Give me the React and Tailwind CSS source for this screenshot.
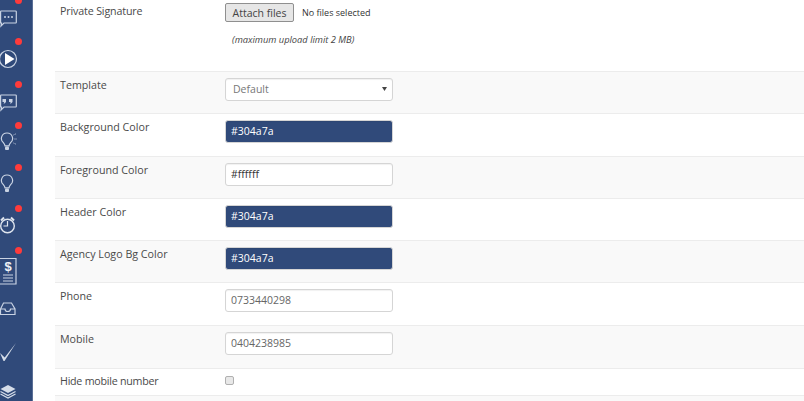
import React from "react";

const S = { fill: "none", stroke: "#c9d3e3", strokeWidth: 1.2 };

const Msg = ({ children }) => (
  <svg width="18" height="20" viewBox="0 0 18 20" className="block">
    <path d="M1 2h14.500a.8.800 0 0 1 .8.800v10.400a.8.800 0 0 1-.8.800H4l-3 3 .5-3H.6V2.800A.8.800 0 0 1 1 2z" {...S} />
    {children}
  </svg>
);

const Bulb = ({ rays }) => (
  <svg width="18" height="20" viewBox="0 0 18 20" className="block">
    <path d="M7 1a5.500 5.500 0 0 0-3.500 9.800c.8.800 1.300 1.800 1.500 3h4c.2-1.200.7-2.200 1.500-3A5.500 5.500 0 0 0 7 1z" {...S} />
    <rect x="5" y="14.500" width="4" height="3.500" rx="1" fill="#c9d3e3" />
    {rays && <path d="M13.500 3l2.500-1.200M14.500 7H17M13.500 11l2.500 1.200" stroke="#c9d3e3" strokeWidth="1" strokeDasharray="1 1" />}
  </svg>
);

const icons = [
  {
    cls: "h-[38px] pt-[9px]",
    dot: "top-[-3px]",
    svg: (
      <Msg>
        <circle cx="5" cy="8" r="1" fill="#c9d3e3" />
        <circle cx="8.500" cy="8" r="1" fill="#c9d3e3" />
        <circle cx="12" cy="8" r="1" fill="#c9d3e3" />
      </Msg>
    ),
  },
  {
    cls: "h-[43px] pt-[11px]",
    dot: "top-[0px]",
    svg: (
      <svg width="20" height="20" viewBox="0 0 20 20" className="block">
        <circle cx="8" cy="10" r="8.500" {...S} />
        <path d="M5 4 14.500 10 5 16z" fill="#fff" />
      </svg>
    ),
  },
  {
    cls: "h-[42px] pt-[12px]",
    dot: "top-[0px]",
    svg: (
      <Msg>
        <path d="M2.500 6h3.500v3l-1.500 1.500H3.500l.7-1.500H2.500zM9 6h3.500v3L11 10.500h-1l.7-1.500H9z" fill="#c9d3e3" />
      </Msg>
    ),
  },
  { cls: "h-[41px] pt-[9px]", dot: "top-[-1px]", svg: <Bulb rays /> },
  { cls: "h-[42px] pt-[10px]", dot: "top-[0px]", svg: <Bulb /> },
  {
    cls: "h-[41px] pt-[9px]",
    dot: "top-[-1px]",
    svg: (
      <svg width="18" height="20" viewBox="0 0 18 20" className="block">
        <circle cx="7.500" cy="11" r="6.800" fill="none" stroke="#dfe5ee" strokeWidth="1.400" />
        <path d="M7.500 6v5H3.500" fill="none" stroke="#dfe5ee" strokeWidth="1.200" />
        <path d="M1 5.500 4 2.500M14 5.500 11 2.500" stroke="#dfe5ee" strokeWidth="2" />
      </svg>
    ),
  },
  {
    cls: "h-[46px] pt-[10px]",
    dot: "top-[0px]",
    svg: (
      <svg width="18" height="28" viewBox="0 0 18 28" className="block">
        <path d="M0 1.500h16V27H0" {...S} />
        <text x="8" y="14" fontFamily="'Liberation Sans', sans-serif" fontSize="13" fontWeight="700" textAnchor="middle" fill="#eef1f6">$</text>
        <path d="M3 18h10M3 21h10M3 24h10" stroke="#c9d3e3" strokeWidth="1.200" />
      </svg>
    ),
  },
  {
    cls: "h-[37px] pt-[9px]",
    svg: (
      <svg width="18" height="14" viewBox="0 0 18 14" className="block">
        <path d="M3.500 1h8l3.500 6v5.500H.5V7zM.5 7H5c0 2 1 2.500 2.700 2.500S10.500 9 10.500 7H15" {...S} />
      </svg>
    ),
  },
  {
    cls: "h-[44px] pt-[12px]",
    svg: (
      <svg width="18" height="20" viewBox="0 0 18 20" className="block">
        <path d="M0 11l3.500 8h1L16 1 4.700 15.500z" fill="#d5dde9" />
      </svg>
    ),
  },
  {
    cls: "h-[27px] pt-[10px]",
    svg: (
      <svg width="18" height="16" viewBox="0 0 18 16" className="block">
        <path d="M8 1l7.500 4L8 9 .5 5z" fill="#d5dde9" />
        <path d="M.5 7.500 8 11.500l7.500-4M.5 10 8 14l7.500-4" fill="none" stroke="#d5dde9" strokeWidth="1.200" />
      </svg>
    ),
  },
];

const inputBase =
  "w-[168px] h-[23px] rounded-[3px] border border-[#d5d5d5] text-[10.5px] outline-none shadow-[inset_0_1px_1px_rgba(0,0,0,0.06)]";

const Row = ({ label, grey, h, children, labelCls = "pt-[5px]" }) => (
  <div className={`flex border-t border-[#ececec] ${grey ? "bg-[#f9f9f9]" : "bg-white"} ${h}`}>
    <div className={`w-[170px] pl-[5px] text-[#4a4a4a] text-[10.7px] leading-[16px] ${labelCls}`}>{label}</div>
    <div className="flex-1">{children}</div>
  </div>
);

const Box = ({ value, dark }) => (
  <div className="pt-[6px]">
    <input
      readOnly
      value={value}
      className={`${inputBase} block px-[5px] pb-[2px] ${dark ? "bg-[#304a7a] text-white font-medium" : "bg-white text-[#333333]"}`}
    />
  </div>
);

const Field = ({ value }) => (
  <div className="pt-[6px]">
    <input readOnly value={value} className={`${inputBase} block px-[5px] pb-[2px] bg-white text-[#666666]`} />
  </div>
);

export default function App() {
  return (
    <div className="flex h-[401px] w-[804px] overflow-hidden bg-white font-['Open_Sans',sans-serif]">
      <aside className="w-[33px] shrink-0 bg-[#304a7a] border-r border-[#5a6f96] overflow-hidden">
        {icons.map((it, i) => (
          <div key={i} className={`relative ${it.cls}`}>
            {it.svg}
            {it.dot && <span className={`absolute left-[15px] ${it.dot} w-[7px] h-[7px] rounded-full bg-[#ff3b3b]`} />}
          </div>
        ))}
      </aside>
      <main className="ml-[22px] flex-1 min-w-0">
        <div className="flex h-[71px] bg-white">
          <div className="w-[170px] pl-[5px] pt-[3px] text-[#4a4a4a] text-[10.7px] leading-[16px] tracking-[-0.15px]">Private Signature</div>
          <div className="flex-1 pt-[3px]">
            <div className="flex items-center">
              <button className="w-[69px] h-[19px] pt-[1px] rounded-[2px] border border-[#8f8f8f] bg-[#e6e6e6] text-[#444444] text-[10.5px] leading-none">
                Attach files
              </button>
              <span className="ml-[8px] text-[9px] text-[#333333]">No files selected</span>
            </div>
            <p className="mt-[11px] pl-[7px] text-[9.3px] italic text-[#444444] leading-[14px]">(maximum upload limit 2 MB)</p>
          </div>
        </div>
        <Row label="Template" grey h="h-[42px]">
          <div className="pt-[6px] relative w-[168px]">
            <select className={`${inputBase} block appearance-none bg-white text-[#777777] px-[7px]`} defaultValue="Default">
              <option>Default</option>
            </select>
            <svg className="absolute right-[5px] top-[15px]" width="6" height="5" viewBox="0 0 6 5">
              <path d="M0 0h5L2.500 4z" fill="#444444" />
            </svg>
          </div>
        </Row>
        <Row label="Background Color" h="h-[43px]"><Box value="#304a7a" dark /></Row>
        <Row label="Foreground Color" grey h="h-[42px]"><Box value="#ffffff" /></Row>
        <Row label="Header Color" h="h-[42px]"><Box value="#304a7a" dark /></Row>
        <Row label="Agency Logo Bg Color" grey h="h-[42px]"><Box value="#304a7a" dark /></Row>
        <Row label="Phone" h="h-[43px]"><Field value="0733440298" /></Row>
        <Row label="Mobile" grey h="h-[43px]"><Field value="0404238985" /></Row>
        <Row label="Hide mobile number" h="h-[27px]" labelCls="pt-[4px] tracking-[-0.25px]">
          <div className="pt-[7px]">
            <input type="checkbox" className="block w-[9px] h-[9px] m-0 appearance-none rounded-[2px] border border-[#b0b0b0] bg-[#e8e8e8]" />
          </div>
        </Row>
        <div className="h-[20px] border-t border-[#ececec] bg-[#f9f9f9]" />
      </main>
    </div>
  );
}
